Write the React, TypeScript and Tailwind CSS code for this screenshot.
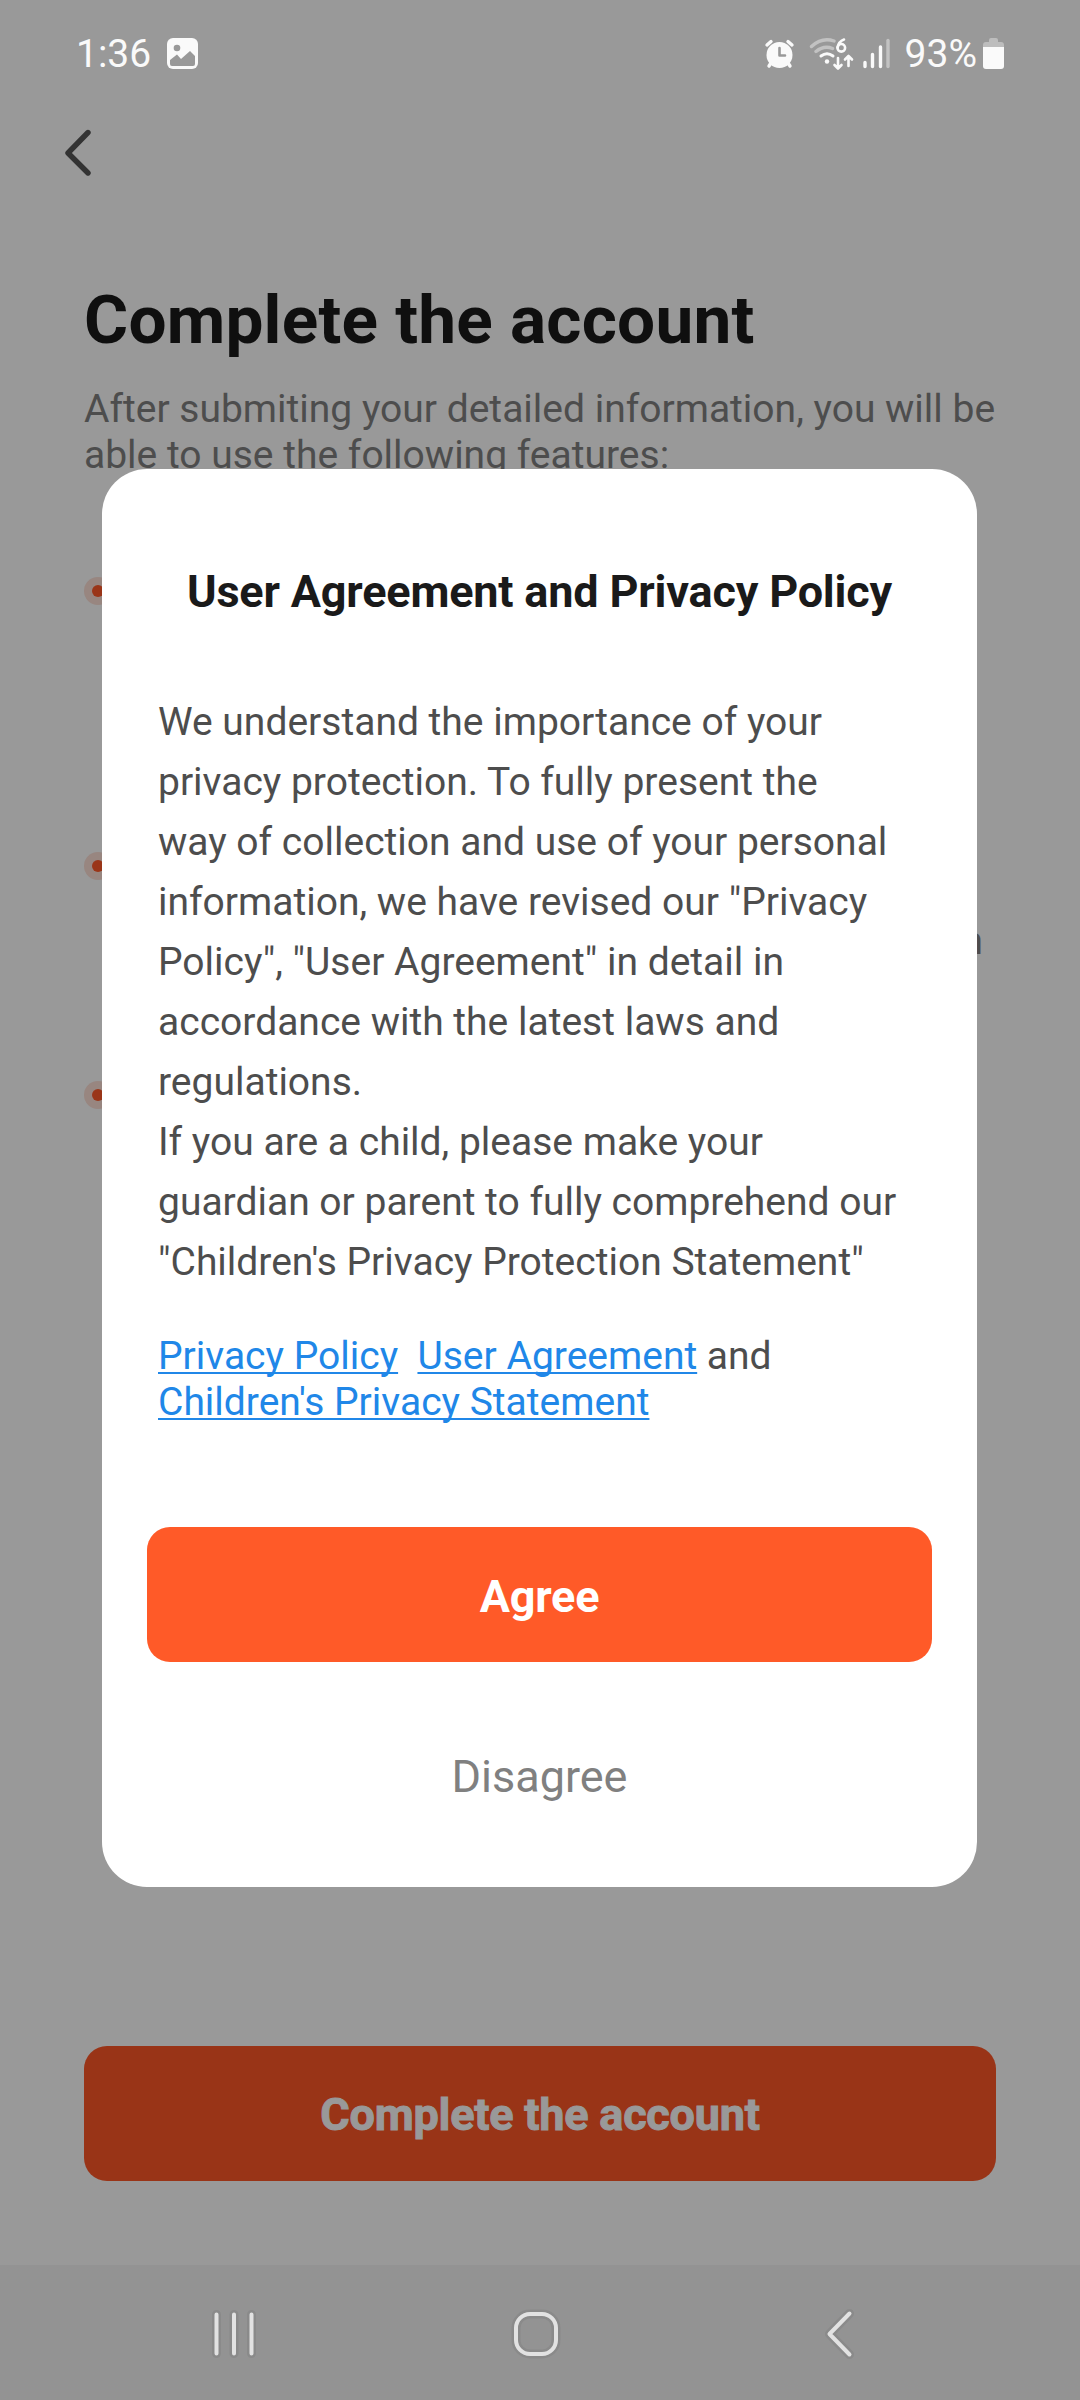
import React from "react";

const ALERT_PARAGRAPH = [
  "We understand the importance of your",
  "privacy protection. To fully present the",
  "way of collection and use of your personal",
  'information, we have revised our "Privacy',
  'Policy", "User Agreement" in detail in',
  "accordance with the latest laws and",
  "regulations.",
  "If you are a child, please make your",
  "guardian or parent to fully comprehend our",
  '"Children\'s Privacy Protection Statement"',
];

function StatusBar() {
  return (
    <header className="flex h-[107px] items-center text-[#fafafa]">
      <span className="ml-[76px] text-[39px] leading-[46px]">1:36</span>
      <svg className="ml-[16px]" width="32" height="32" viewBox="0 0 32 32">
        <rect width="31" height="31" rx="6" fill="#fafafa" />
        <circle cx="10" cy="10" r="3.3" fill="#999" />
        <path d="M3 22L10 16.500L14 21L23 13L28 18V26Q28 28 26 28H5Q3 28 3 26Z" fill="#999" />
      </svg>
      <svg className="ml-auto" width="126" height="34" viewBox="764 37 126 34" fill="none" strokeLinecap="round" strokeLinejoin="round">
        <circle cx="779.5" cy="55" r="13" fill="#fafafa" />
        <path d="M767 45L771 41.500M792 45L788 41.500M771 63L769 66M788 63L790 66" stroke="#fafafa" strokeWidth="3.4" />
        <path d="M779.5 48V55.500H785" stroke="#999" strokeWidth="2.6" />
        <path d="M811.5 46.500Q822 37 834 41M816 51.500Q824 45 832.5 48.500" stroke="#c2c2c2" strokeWidth="3.4" />
        <path d="M821 56Q827 51.500 833 56" stroke="#fafafa" strokeWidth="3" />
        <circle cx="827" cy="61.5" r="2.2" fill="#fafafa" />
        <circle cx="841.3" cy="47.8" r="3.8" stroke="#fafafa" strokeWidth="2.6" />
        <path d="M844 39.500Q838.500 41.500 837.500 47.800" stroke="#fafafa" strokeWidth="2.6" />
        <path d="M838 58V68M834.500 65L838 68.500L841.500 65M848.500 66V56M845 59.500L848.500 56L852 59.500" stroke="#fafafa" strokeWidth="2.6" />
        <path d="M865 62.500V66.500M872.500 54.500V66.500M880.500 47V66.500" stroke="#fafafa" strokeWidth="3.4" />
        <path d="M888 40.500V66.500" stroke="#c2c2c2" strokeWidth="3.4" />
      </svg>
      <span className="ml-[15px] text-[39px] leading-[46px]">93%</span>
      <svg className="mr-[75px] ml-[6px]" width="22" height="32" viewBox="0 0 22 32">
        <path d="M0 9V7Q0 4 3 4H6V2Q6 0 8 0H13Q15 0 15 2V4H18Q21 4 21 7V9Z" fill="#bdbdbd" />
        <path d="M0 9H21V28Q21 31 18 31H3Q0 31 0 28Z" fill="#fafafa" />
      </svg>
    </header>
  );
}

function Bullet() {
  return (
    <span className="flex size-[28px] items-center justify-center rounded-full bg-[#988680]">
      <span className="size-[12px] rounded-full bg-[#9a3518]" />
    </span>
  );
}

function AccountPage() {
  return (
    <div className="flex h-full flex-col bg-[#999]">
      <StatusBar />
      <svg className="mt-[22px] ml-[64px] shrink-0" width="28" height="48" viewBox="0 0 28 48" fill="none" stroke="#333" strokeWidth="5.4" strokeLinecap="round" strokeLinejoin="round">
        <path d="M24 3.500L4 24L24 44" />
      </svg>
      <main className="flex flex-1 flex-col px-[84px]">
        <h1 className="mt-[103px] text-[67.5px] leading-[80px] font-bold tracking-[0.23px] text-[#0f0f0f]">Complete the account</h1>
        <p className="mt-[26px] text-[39px] leading-[46px] whitespace-nowrap text-[#4d4d4d]">
          After submiting your detailed information, you will be
          <br />
          able to use the following features:
        </p>
        <div className="mt-[99px]"><Bullet /></div>
        <div className="mt-[247px]"><Bullet /></div>
        <p className="-mt-[14px] h-0 w-[899px] text-right text-[39px] leading-[46px] text-[#4d4d4d]"><span className="relative top-[52px]">n</span></p>
        <div className="mt-[215px]"><Bullet /></div>
        <button className="mt-auto mb-[84px] flex h-[135px] items-center justify-center rounded-[23px] bg-[#993417] pt-[3px] text-[45px] font-bold tracking-[-0.23px] text-[#999] [-webkit-text-stroke:1px_#999]">
          Complete the account
        </button>
      </main>
      <nav className="flex h-[135px] items-center bg-[#939393] pt-[3px]">
        <svg width="1080" height="60" viewBox="0 2304 1080 60" fill="none" strokeLinecap="round" strokeLinejoin="round">
          {["#8a8a8a", "#e2e2e2"].map((color, layer) => (
            <g key={color} stroke={color} strokeWidth={layer === 0 ? 9 : 4}>
              <path d="M216.500 2314.500V2353.500M234 2314.500V2353.500M251.500 2314.500V2353.500" />
              <rect x="516" y="2314" width="40" height="40" rx="14" />
              <path d="M849.500 2313.500L829.500 2334L849.500 2354.500" />
            </g>
          ))}
        </svg>
      </nav>
    </div>
  );
}

function AgreementDialog() {
  return (
    <section role="dialog" className="absolute top-[469px] left-[102px] flex h-[1418px] w-[875px] flex-col rounded-[45px] bg-white px-[45px]">
      <h2 className="mt-[96px] text-center text-[45px] leading-[54px] font-bold tracking-[-0.19px] whitespace-nowrap text-[#1a1a1a]">User Agreement and Privacy Policy</h2>
      <p className="mt-[73px] ml-[11px] text-[39px] leading-[60px] whitespace-nowrap text-[#4d4d4d]">
        {ALERT_PARAGRAPH.map((line) => (
          <span key={line} className="block">{line}</span>
        ))}
      </p>
      <p className="mt-[41px] ml-[11px] text-[39px] leading-[46px] whitespace-pre text-[#4d4d4d]">
        <a className="text-[#2087e8] underline decoration-2 underline-offset-3 [text-decoration-skip-ink:none]">Privacy Policy</a>
        {"  "}
        <a className="text-[#2087e8] underline decoration-2 underline-offset-3 [text-decoration-skip-ink:none]">User Agreement</a>
        {" and\n"}
        <a className="text-[#2087e8] underline decoration-2 underline-offset-3 [text-decoration-skip-ink:none]">Children's Privacy Statement</a>
      </p>
      <button className="mt-[102px] flex h-[135px] items-center justify-center rounded-[23px] bg-[#ff5a28] pt-[4px] text-[45px] font-bold tracking-[-0.2px] text-white">Agree</button>
      <button className="mt-[47px] flex h-[135px] items-center justify-center text-[45px] text-[#808080]">Disagree</button>
    </section>
  );
}

export default function App() {
  return (
    <div className="relative h-[2400px] w-[1080px] overflow-hidden font-[Roboto,sans-serif]">
      <AccountPage />
      <AgreementDialog />
    </div>
  );
}
